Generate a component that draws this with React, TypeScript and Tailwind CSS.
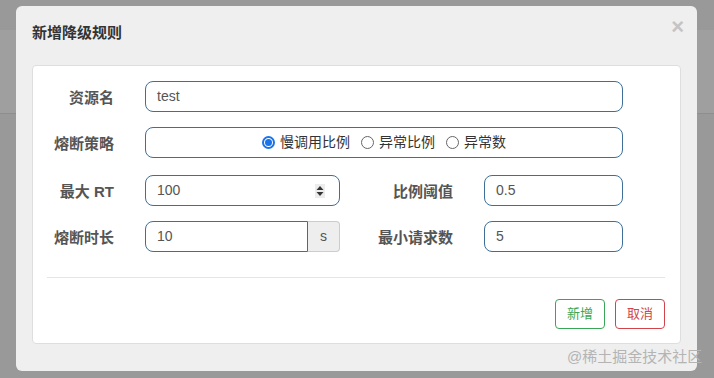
import React from 'react';

const font = { fontFamily: '"Liberation Sans", "Noto Sans CJK SC", sans-serif' };

const Label: React.FC<{ text: string; w: string }> = ({ text, w }) => (
  <div className={`${w} shrink-0 pt-[3px] text-right text-[15px] font-bold text-[#555]`}>{text}</div>
);

const Field: React.FC<{ value: string; w: string; children?: React.ReactNode }> = ({ value, w, children }) => (
  <div className={`${w} h-[31px] ml-[31px] flex items-center justify-between rounded-[8px] border border-[#3f6f99] bg-white pl-[11px] pr-[14px] text-[14px] text-[#555]`}>
    <span>{value}</span>
    {children}
  </div>
);

const Radio: React.FC<{ label: string; checked?: boolean }> = ({ label, checked }) => (
  <label className="flex items-center gap-[5px] text-[14px] text-[#333]">
    {checked ? (
      <span className="w-[13px] h-[13px] rounded-full border-[2px] border-[#1a73e8] flex items-center justify-center">
        <span className="w-[7px] h-[7px] rounded-full bg-[#1a73e8]" />
      </span>
    ) : (
      <span className="w-[13px] h-[13px] rounded-full border border-[#666] bg-white" />
    )}
    {label}
  </label>
);

export default function App() {
  return (
    <div className="relative w-[714px] h-[378px] overflow-hidden bg-[#999]" style={font}>
      <div className="h-[30px]" />
      <div className="h-[84px] bg-[#9f9f9f] border-b border-[#8e8e8e]" />

      <div className="absolute left-[16px] top-[6px] w-[681px] h-[365px] rounded-[6px] bg-[#efefef] px-4 pt-[17px]">
        <div className="absolute right-[13px] top-[8px] text-[22px] font-bold leading-[26px] text-[#c4c4c4]">×</div>
        <div className="text-[15px] font-bold leading-5 text-[#333]">新增降级规则</div>

        <div className="mt-[22px] h-[279px] rounded-[4px] border border-[#dedede] bg-white pt-[15px]">
          <div className="flex items-center">
            <Label text="资源名" w="w-[81px]" />
            <Field value="test" w="w-[478px]" />
          </div>

          <div className="flex items-center mt-[15px]">
            <Label text="熔断策略" w="w-[81px]" />
            <div className="w-[478px] h-[31px] ml-[31px] flex items-center justify-center gap-[11px] rounded-[8px] border border-[#3f6f99] bg-white">
              <Radio label="慢调用比例" checked />
              <Radio label="异常比例" />
              <Radio label="异常数" />
            </div>
          </div>

          <div className="flex items-center mt-[17px]">
            <Label text="最大 RT" w="w-[81px]" />
            <Field value="100" w="w-[195px]">
              <span className="w-[10px] h-[14px] bg-[#ececec] flex items-center justify-center">
                <svg width="8" height="12" viewBox="0 0 8 12">
                  <path d="M4 1 L7.5 5 H0.5 Z" fill="#333" />
                  <path d="M4 11 L7.5 7 H0.5 Z" fill="#333" />
                </svg>
              </span>
            </Field>
            <Label text="比例阈值" w="w-[113px]" />
            <Field value="0.5" w="w-[139px]" />
          </div>

          <div className="flex items-center mt-[15px]">
            <Label text="熔断时长" w="w-[81px]" />
            <div className="ml-[31px] flex h-[31px] w-[195px]">
              <div className="flex-1 flex items-center rounded-l-[8px] border border-[#3f6f99] bg-white pl-[11px] text-[14px] text-[#555]">10</div>
              <div className="w-[32px] flex items-center justify-center rounded-r-[4px] border border-l-0 border-[#ccc] bg-[#eee] text-[14px] text-[#555]">s</div>
            </div>
            <Label text="最小请求数" w="w-[113px]" />
            <Field value="5" w="w-[139px]" />
          </div>

          <div className="mt-[25px] ml-[14px] mr-[15px] border-t border-[#e5e5e5]" />

          <div className="mt-[21px] mr-[15px] flex justify-end gap-[10px]">
            <button className="w-[50px] h-[30px] rounded-[4px] border border-[#3aa655] bg-white text-[13px] text-[#3aa655]">新增</button>
            <button className="w-[50px] h-[30px] rounded-[4px] border border-[#d0454c] bg-white text-[13px] text-[#d0454c]">取消</button>
          </div>
        </div>
      </div>

      <div className="absolute left-[567px] top-[347px] text-[15px] leading-5 text-[#b4b4b4]">@稀土掘金技术社区</div>
    </div>
  );
}
